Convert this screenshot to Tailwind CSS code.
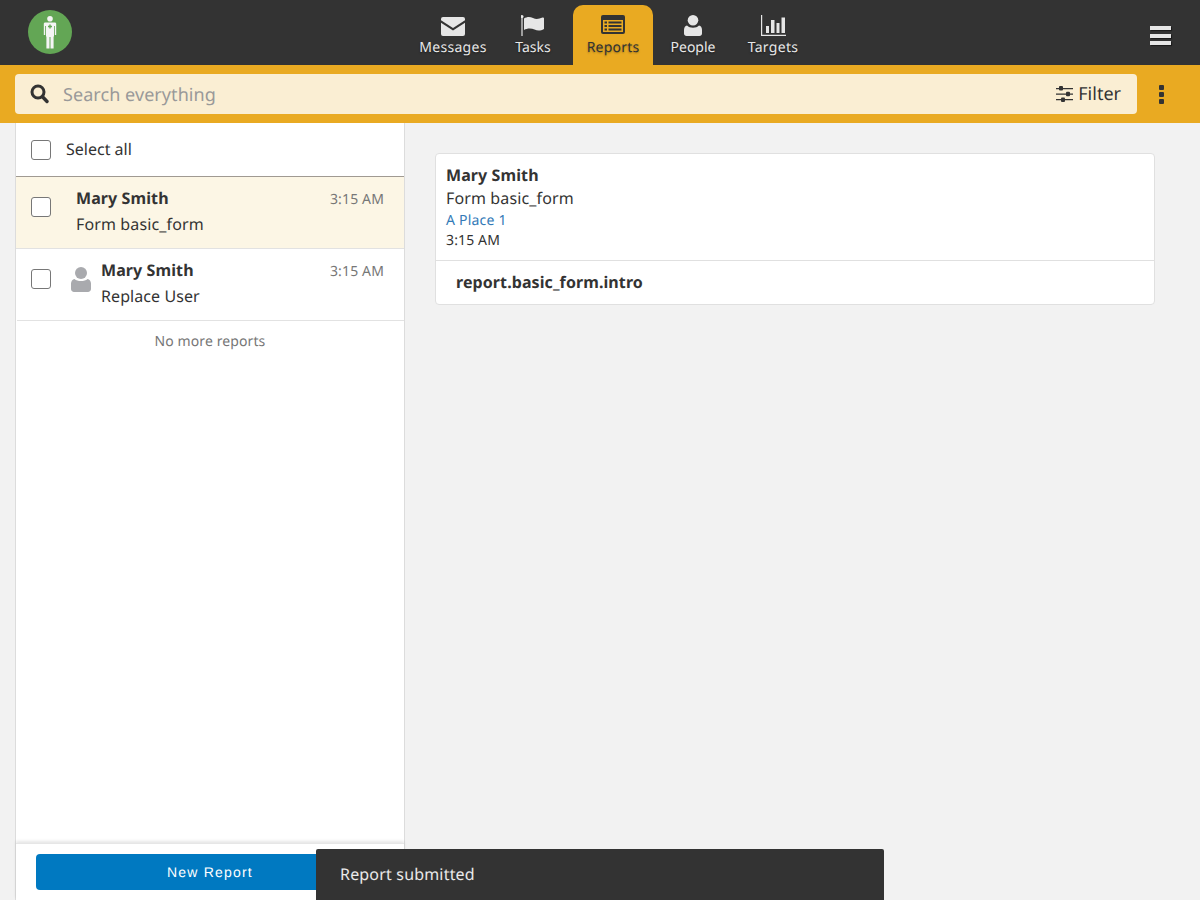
<!DOCTYPE html>
<html lang="en">
<head>
  <meta charset="UTF-8">
  <title>Reports</title>
  <script src="https://cdn.jsdelivr.net/npm/@tailwindcss/browser@4"></script>
</head>
<body class="h-[900px] w-[1200px] overflow-hidden relative bg-[#f2f2f2] text-[#333] font-['Noto_Sans',sans-serif] text-base [text-rendering:geometricPrecision]">

  <!-- Header -->
  <header class="h-[65px] bg-[#333] flex relative">
    <div class="w-[413px] pl-[28px] pt-[10px]">
      <div class="w-[44px] h-[44px] rounded-full bg-[#63a655] flex items-center justify-center">
        <svg width="14" height="33" viewBox="0 0 14 33" fill="#f5f5f5">
          <circle cx="7" cy="2.800" r="2.800"/>
          <path d="M2.200 6.500h9.600c.8 0 1.400.6 1.400 1.400V19h-1.400V10h-.8v10l-.4 1v11.500H7.500V21h-1v11.500H3.400V21L3 20V10h-.8v9H.8V7.900c0-.8.6-1.400 1.400-1.400z"/>
          <path d="M6.300 8.500h1.400v1.300H9v1.400H7.700v1.300H6.300v-1.300H5V9.800h1.300z" fill="#63a655"/>
        </svg>
      </div>
    </div>

    <nav class="flex text-[14px] text-[#e8e8e8] [text-shadow:0_1px_2px_rgba(0,0,0,0.5)]">
      <a class="w-[80px] mt-[5px] flex flex-col items-center">
        <svg class="mt-[12px]" width="24" height="19" viewBox="0 0 24 19" fill="#e6e6e6">
          <path d="M2 0h20a2 2 0 0 1 2 2v1.200L12 11 0 3.200V2a2 2 0 0 1 2-2z"/>
          <path d="M0 5.800l12 7.800 12-7.800V17a2 2 0 0 1-2 2H2a2 2 0 0 1-2-2z"/>
        </svg>
        <span class="leading-[20px] mt-[2px] tracking-[0.3px]">Messages</span>
      </a>
      <a class="w-[80px] mt-[5px] flex flex-col items-center">
        <svg class="mt-[10px]" width="24" height="21" viewBox="0 0 24 21" fill="#e6e6e6">
          <path d="M.4 1h1.200v20H.4z"/>
          <circle cx="1" cy="1.500" r="1.500"/>
          <path d="M3 3.500c3-2 6-2 9-.5s6 1 9.500-.5c.8-.3 1.500 0 1.500.8V14c-3.500 2-6.500 2-9.500.5S6 13 3 15z"/>
        </svg>
        <span class="leading-[20px] mt-[2px]">Tasks</span>
      </a>
      <a class="w-[80px] mt-[5px] h-[60px] flex flex-col items-center bg-[#e9aa22] rounded-t-[10px] text-[#333] [text-shadow:0_1px_2px_rgba(0,0,0,0.3)]">
        <svg class="mt-[10px]" width="24" height="19" viewBox="0 0 24 19">
          <rect width="24" height="19" rx="2" fill="#333"/>
          <rect x="2" y="5" width="20" height="12" fill="#e9aa22"/>
          <path fill="#333" d="M3.500 6.500h2.500v2H3.500zM3.500 10h2.500v2H3.500zM3.500 13.500h2.500v2H3.500zM7.500 6.500h13v2h-13zM7.500 10h13v2h-13zM7.500 13.500h13v2h-13z"/>
        </svg>
        <span class="leading-[20px] mt-[4px] tracking-[0.2px]">Reports</span>
      </a>
      <a class="w-[80px] mt-[5px] flex flex-col items-center">
        <svg class="mt-[10px]" width="18" height="21" viewBox="0 0 18 21" fill="#e6e6e6">
          <circle cx="9" cy="5.300" r="5.300"/>
          <path d="M3 10.500c1.500 1.700 3.500 2.200 6 2.200s4.500-.5 6-2.200c2 .5 3 2.300 3 4.500v3.500c0 1.400-1.100 2.500-2.500 2.500h-13C1.100 21 0 19.900 0 18.500V15c0-2.200 1-4 3-4.500z"/>
        </svg>
        <span class="leading-[20px] mt-[2px]">People</span>
      </a>
      <a class="w-[80px] mt-[5px] flex flex-col items-center">
        <svg class="mt-[10px]" width="25" height="21" viewBox="0 0 25 21" fill="#e6e6e6">
          <path d="M0 0h1.200v19.800H25V21H0z"/>
          <path d="M5 11h3v7H5zM10 5h3.500v13H10zM15.500 8h3v10h-3zM20.500 2.500H24V18h-3.500z"/>
        </svg>
        <span class="leading-[20px] mt-[2px] tracking-[0.3px]">Targets</span>
      </a>
    </nav>

    <div class="ml-auto mr-[29px] mt-[26px] flex flex-col gap-[3.500px]">
      <div class="w-[21px] h-[4px] bg-[#e6e6e6] shadow-[1px_1px_1px_rgba(0,0,0,0.5)]"></div>
      <div class="w-[21px] h-[4px] bg-[#e6e6e6] shadow-[1px_1px_1px_rgba(0,0,0,0.5)]"></div>
      <div class="w-[21px] h-[4px] bg-[#e6e6e6] shadow-[1px_1px_1px_rgba(0,0,0,0.5)]"></div>
    </div>
  </header>

  <!-- Search bar -->
  <div class="h-[58px] bg-[#e9aa22] flex items-center pl-[15px]">
    <div class="w-[1122px] h-[40px] bg-[#faeed3] rounded-[4px] flex items-center pl-[15px] pr-[16px] mt-[-1px]">
      <svg width="19" height="20" viewBox="0 0 19 20" fill="none" stroke="#333" class="mr-[14px]">
        <circle cx="8" cy="8" r="6" stroke-width="3"/>
        <path d="M12.500 12.800L17 17.500" stroke-width="3.400" stroke-linecap="round"/>
      </svg>
      <span class="text-[18px] text-[#999] relative top-[2px] tracking-[0.06px]">Search everything</span>
      <div class="ml-auto flex items-center">
        <svg width="17" height="16" viewBox="0 0 17 16" fill="#333" class="mr-[5px]">
          <path d="M0 2h17v1.200H0zM0 7.500h17v1.200H0zM0 13h17v1.200H0z"/>
          <rect x="3" y="0" width="4" height="4.500" rx="1"/>
          <rect x="10" y="5.800" width="4" height="4.500" rx="1"/>
          <rect x="5" y="11.500" width="4" height="4.500" rx="1"/>
        </svg>
        <span class="text-[18px] text-[#333] relative top-[1px]">Filter</span>
      </div>
    </div>
    <div class="ml-[22px] flex flex-col gap-[2px] mt-[1px]">
      <div class="w-[5px] h-[5px] rounded-[1px] bg-[#333]"></div>
      <div class="w-[5px] h-[5px] rounded-[1px] bg-[#333]"></div>
      <div class="w-[5px] h-[5px] rounded-[1px] bg-[#333]"></div>
    </div>
  </div>

  <div class="flex h-[777px]">
    <!-- Report list -->
    <aside class="ml-[15px] w-[390px] bg-white border-x border-[#dcdcdc] flex flex-col relative">
      <div class="h-[54px] flex items-center pl-[15px] border-b border-[#a09a92]">
        <div class="w-[20px] h-[20px] rounded-[3px] border border-[#777] bg-white"></div>
        <span class="ml-[15px] text-[16px] leading-[24px] -mt-[2px]">Select all</span>
      </div>

      <div class="h-[72px] bg-[#fcf6e5] border-b border-[#e2e2e2] flex pl-[15px] pr-[20px] pt-[20px] relative">
        <div class="w-[20px] h-[20px] rounded-[3px] border border-[#777] bg-white"></div>
        <div class="ml-[25px] -mt-[12px] flex-1">
          <div class="font-bold leading-[26px] tracking-[0.1px]">Mary Smith</div>
          <div class="leading-[26px] tracking-[0.13px]">Form basic_form</div>
        </div>
        <span class="text-[14px] text-[#777] -mt-[10px] leading-[26px] tracking-[0.14px]">3:15 AM</span>
      </div>

      <div class="h-[72px] border-b border-[#e2e2e2] flex pl-[15px] pr-[20px] pt-[20px] ml-[1px]">
        <div class="w-[20px] h-[20px] -ml-[1px] rounded-[3px] border border-[#777] bg-white"></div>
        <svg class="ml-[20px] mt-[-2px]" width="20" height="25" viewBox="0 0 20 25" fill="#a9aaae">
          <circle cx="10" cy="6" r="6"/>
          <path d="M3.500 12c1.500 1.500 3.800 2 6.500 2s5-.5 6.500-2c2 .5 3.500 2.300 3.500 4.500V22c0 1.600-1.400 3-3 3H3c-1.600 0-3-1.400-3-3v-5.500C0 14.300 1.500 12.500 3.500 12z"/>
        </svg>
        <div class="ml-[10px] -mt-[12px] flex-1">
          <div class="font-bold leading-[26px] tracking-[0.1px]">Mary Smith</div>
          <div class="leading-[26px] tracking-[0.08px]">Replace User</div>
        </div>
        <span class="text-[14px] text-[#777] -mt-[10px] leading-[26px] tracking-[0.14px]">3:15 AM</span>
      </div>

      <div class="text-center text-[14px] text-[#777] mt-[11px] leading-[20px] tracking-[0.1px]">No more reports</div>

      <div class="mt-auto h-[57px] border-t border-[#e6e6e6] shadow-[0_-2px_3px_rgba(0,0,0,0.1)] pl-[20px] pr-[20px] pt-[10px]">
        <div class="h-[36px] rounded-[4px] bg-[#0079c1] text-white text-[14px] tracking-[1.200px] flex items-center justify-center font-['Liberation_Sans',sans-serif]">New Report</div>
      </div>
    </aside>

    <!-- Report detail -->
    <main class="flex-1 pl-[30px] pt-[30px]">
      <div class="w-[720px] h-[152px] bg-white border border-[#e0e0e0] rounded-[4px]">
        <div class="h-[107px] pl-[10px] pt-[9px] border-b border-[#e0e0e0]">
          <div class="font-bold leading-[24px] tracking-[0.1px]">Mary Smith</div>
          <div class="leading-[22px] tracking-[0.13px]">Form basic_form</div>
          <div class="text-[14px] text-[#337ab7] leading-[20px] mt-[2px] tracking-[0.22px]">A Place 1</div>
          <div class="text-[14px] leading-[20px] tracking-[0.14px]">3:15 AM</div>
        </div>
        <div class="pl-[20px] pt-[9px] font-bold leading-[24px] tracking-[0.09px]">report.basic_form.intro</div>
      </div>
    </main>
  </div>

  <!-- Toast -->
  <div class="absolute left-[316px] top-[849px] w-[568px] h-[51px] bg-[#333] text-white/90 pl-[24px] pt-[13px] leading-[24px] rounded-t-[2px] tracking-[0.18px]">Report submitted</div>
</body>
</html>
